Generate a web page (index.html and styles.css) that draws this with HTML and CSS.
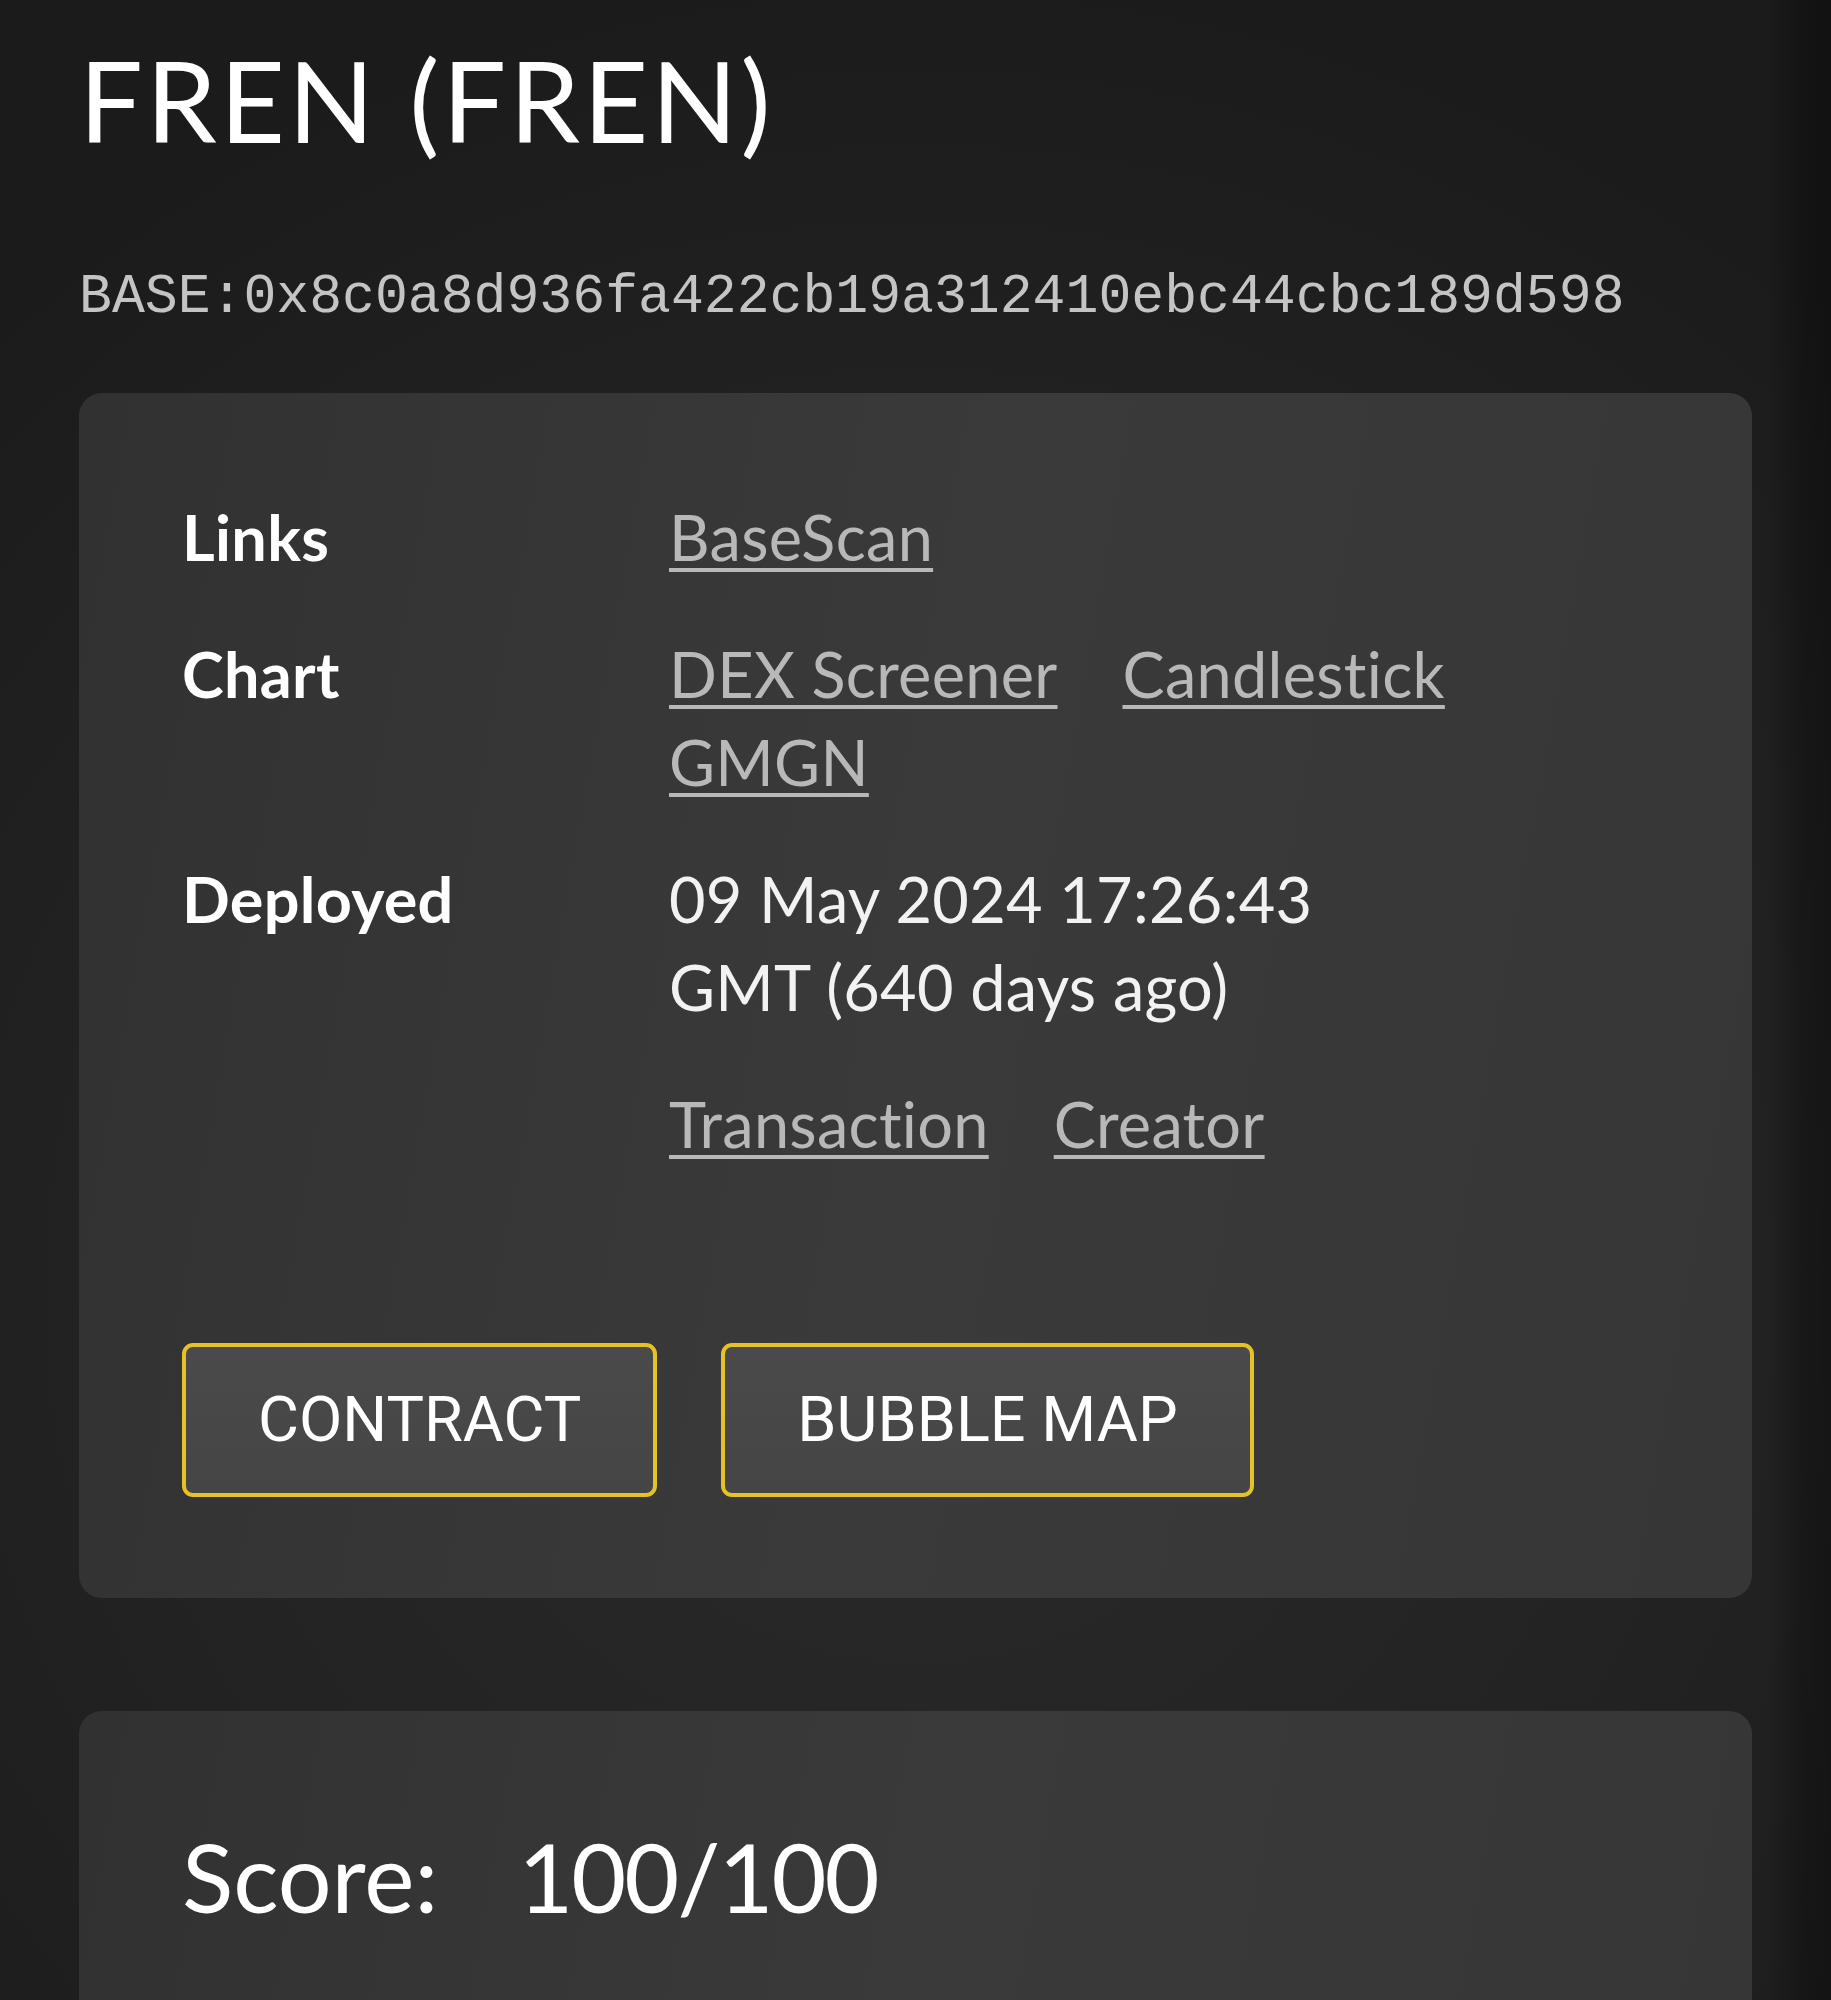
FILE: index.html
```html
<!DOCTYPE html>
<html lang="en">
<head>
<meta charset="utf-8">
<title>FREN (FREN)</title>
<link rel="stylesheet" href="styles.css">
</head>
<body>
<div class="page">
  <h1 class="title">FREN (FREN)</h1>
  <div class="address">BASE:0x8c0a8d936fa422cb19a312410ebc44cbc189d598</div>

  <section class="card info">
    <div class="rows">
      <div class="row">
        <div class="label">Links</div>
        <div class="value links"><a href="#">BaseScan</a></div>
      </div>
      <div class="row">
        <div class="label">Chart</div>
        <div class="value links"><a href="#">DEX Screener</a><a href="#">Candlestick</a><a href="#">GMGN</a></div>
      </div>
      <div class="row">
        <div class="label">Deployed</div>
        <div class="value">09 May 2024 17:26:43<br>GMT (640 days ago)</div>
      </div>
      <div class="row">
        <div class="label"></div>
        <div class="value links"><a href="#">Transaction</a><a href="#">Creator</a></div>
      </div>
    </div>
    <div class="actions">
      <button class="btn" type="button">CONTRACT</button>
      <button class="btn" type="button">BUBBLE MAP</button>
    </div>
  </section>

  <section class="card score">
    <div class="score-line"><span class="score-label">Score:</span><span class="score-value">100/100</span></div>
  </section>
</div>
</body>
</html>
```
FILE: styles.css
```css
html, body {
  margin: 0;
  padding: 0;
}

body {
  min-height: 2000px;
  background:
    linear-gradient(90deg, rgba(0,0,0,0) 0%, rgba(0,0,0,0) 96.5%, rgba(0,0,0,0.28) 98.5%, rgba(0,0,0,0.35) 100%),
    radial-gradient(ellipse 75% 60% at 50% 58%, #2a2a2b 0%, #232324 55%, #1b1b1c 100%);
  background-color: #1d1d1e;
  color: #f2f2f2;
  font-family: Lato, "Noto Sans", sans-serif;
  overflow: hidden;
}

.page {
  padding: 32px 79px 0 79px;
}

.title {
  margin: 0;
  font-family: Lato, "Noto Sans", sans-serif;
  font-weight: 400;
  font-size: 113px;
  line-height: 1.2;
  color: #ffffff;
  letter-spacing: 3px;
}

.address {
  margin-top: 96px;
  font-family: "Liberation Mono", "DejaVu Sans Mono", monospace;
  font-size: 54.8px;
  line-height: 66px;
  color: #c4c4c4;
  white-space: nowrap;
}

.card {
  border-radius: 23px;
  background: linear-gradient(100deg, #313132 0%, #3a3a3b 50%, #363637 100%);
}

.info {
  margin-top: 63px;
  padding: 100px 103px 101px 103px;
}

.rows {
  display: flex;
  flex-direction: column;
  gap: 49px;
}

.row {
  display: grid;
  grid-template-columns: 487px 1fr;
  font-size: 63px;
  line-height: 88px;
}

.label {
  font-weight: 700;
  color: #ffffff;
  letter-spacing: 0.3px;
}

.value {
  color: #f2f2f2;
  letter-spacing: 0.3px;
}

.links {
  display: flex;
  flex-wrap: wrap;
  column-gap: 65px;
  max-width: 860px;
}

.links a {
  color: #b8b8b8;
  text-decoration: underline;
  text-decoration-thickness: 4px;
  text-underline-offset: 7px;
}

.actions {
  margin-top: 175px;
  display: flex;
  gap: 64px;
}

.btn {
  height: 154px;
  padding: 0 72px;
  border: 4px solid #e6c229;
  border-radius: 11px;
  background: linear-gradient(180deg, #4a4a4b 0%, #454546 100%);
  color: #ffffff;
  font-family: Roboto, "Liberation Sans", sans-serif;
  font-size: 63px;
  font-weight: 400;
  line-height: 1;
  display: flex;
  align-items: center;
  justify-content: center;
}

.score {
  margin-top: 113px;
  padding: 108px 103px 300px 103px;
}

.score-line {
  display: flex;
  gap: 80px;
  font-size: 95px;
  line-height: 1.2;
  color: #ffffff;
}

.score-value {
  letter-spacing: -2px;
}
```
